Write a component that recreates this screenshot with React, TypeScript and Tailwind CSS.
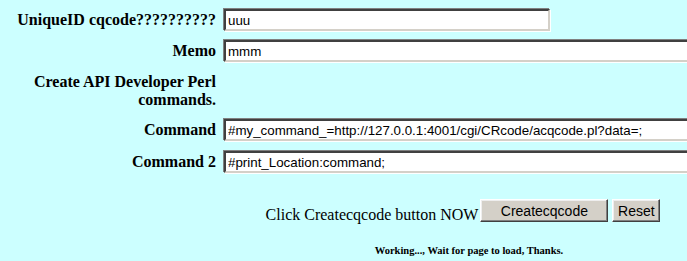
const serif = "font-['Liberation_Serif','Times_New_Roman',serif]"
const sans = "font-['Liberation_Sans',Arial,sans-serif]"

function Field({ value, width }: { value: string; width: string }) {
  return (
    <input
      readOnly
      value={value}
      className={`${sans} ${width} h-[22px] shrink-0 border-2 border-t-[#404040] border-l-[#404040] border-r-[#d4d0c8] border-b-[#d4d0c8] bg-white px-[2px] text-[13.33px] text-black shadow-[-1px_-1px_0_#808080,1px_1px_0_#ffffff] outline-none`}
    />
  )
}

function Label({ children }: { children: React.ReactNode }) {
  return (
    <div className={`${serif} w-[206px] shrink-0 text-right text-[16px] font-bold leading-[18px] text-black`}>
      {children}
    </div>
  )
}

function Btn({ label, width }: { label: string; width: string }) {
  return (
    <button
      type="button"
      className={`${sans} ${width} h-[23px] shrink-0 border border-t-white border-l-white border-r-[#404040] border-b-[#404040] bg-[#d4d0c8] pt-[1px] text-[14px] leading-none text-black shadow-[inset_-1px_-1px_0_#808080,inset_1px_1px_0_#eeeeee]`}
    >
      {label}
    </button>
  )
}

export default function App() {
  return (
    <div className="h-[261px] w-full overflow-hidden bg-[#ccffff]">
      <div className="flex w-[720px] flex-col pl-[10px] pt-[9px]">
        <div className="flex items-center gap-[8px]">
          <Label>UniqueID cqcode??????????</Label>
          <Field value="uuu" width="w-[326px]" />
        </div>

        <div className="mt-[9px] flex items-center gap-[8px]">
          <Label>Memo</Label>
          <Field value="mmm" width="w-[480px]" />
        </div>

        <div className="mt-[9px] flex pb-[1px] pt-[2px]">
          <Label>
            Create API Developer Perl
            <br />
            commands.
          </Label>
        </div>

        <div className="mt-[9px] flex items-center gap-[8px]">
          <Label>Command</Label>
          <Field value="#my_command_=http://127.0.0.1:4001/cgi/CRcode/acqcode.pl?data=;" width="w-[480px]" />
        </div>

        <div className="mt-[10px] flex items-center gap-[8px]">
          <Label>Command 2</Label>
          <Field value="#print_Location:command;" width="w-[480px]" />
        </div>

        <div className="ml-[210px] mt-[26px] flex w-[486px] items-start justify-center">
          <span className={`${serif} mt-[7px] text-[16px] leading-[18px] text-black`}>
            Click Createcqcode button NOW
          </span>
          <div className="ml-[2px] flex gap-[4px]">
            <Btn label="Createcqcode" width="w-[128px]" />
            <Btn label="Reset" width="w-[48px]" />
          </div>
        </div>

        <div className="ml-[216px] mt-[20px] flex w-[486px] justify-center">
          <span className={`${serif} text-[10.5px] font-bold leading-[13px] text-black`}>
            Working..., Wait for page to load, Thanks.
          </span>
        </div>
      </div>
    </div>
  )
}
